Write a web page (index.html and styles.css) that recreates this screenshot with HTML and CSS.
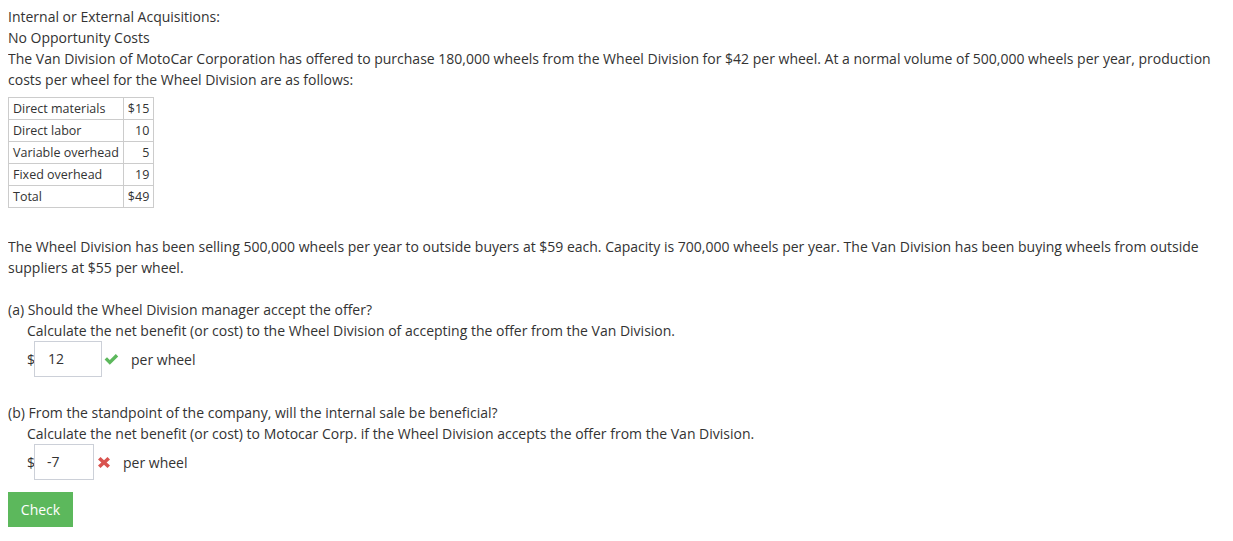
FILE: index.html
```html
<!DOCTYPE html>
<html>
<head>
<meta charset="utf-8">
<link rel="stylesheet" href="styles.css">
</head>
<body>
<div class="intro">
  <div>Internal or External Acquisitions:</div>
  <div>No Opportunity Costs</div>
  <div>The Van Division of MotoCar Corporation has offered to purchase 180,000 wheels from the Wheel Division for $42 per wheel. At a normal volume of 500,000 wheels per year, production costs per wheel for the Wheel Division are as follows:</div>
</div>
<table class="costs">
  <tr><td>Direct materials</td><td class="num">$15</td></tr>
  <tr><td>Direct labor</td><td class="num">10</td></tr>
  <tr><td>Variable overhead</td><td class="num">5</td></tr>
  <tr><td>Fixed overhead</td><td class="num">19</td></tr>
  <tr><td>Total</td><td class="num">$49</td></tr>
</table>
<p class="para">The Wheel Division has been selling 500,000 wheels per year to outside buyers at $59 each. Capacity is 700,000 wheels per year. The Van Division has been buying wheels from outside suppliers at $55 per wheel.</p>

<div class="question q-a">
  <div>(a) Should the Wheel Division manager accept the offer?</div>
  <div class="indent">Calculate the net benefit (or cost) to the Wheel Division of accepting the offer from the Van Division.</div>
  <div class="answer indent">
    <span class="dollar">$</span><span class="field field-a">12</span>
    <svg class="icon icon-ok" width="15" height="11" viewBox="0 0 15 11"><path d="M0.6 5.6 L3 3.2 L5.8 6 L11.8 0 L14.2 2.4 L5.8 10.8 Z" fill="#5cb85c"/></svg>
    <span class="unit">per wheel</span>
  </div>
</div>

<div class="question q-b">
  <div>(b) From the standpoint of the company, will the internal sale be beneficial?</div>
  <div class="indent">Calculate the net benefit (or cost) to Motocar Corp. if the Wheel Division accepts the offer from the Van Division.</div>
  <div class="answer indent">
    <span class="dollar">$</span><span class="field field-b">-7</span>
    <svg class="icon icon-bad" width="12" height="11" viewBox="0 0 12 11"><path d="M2.5 0 L6 3.3 L9.5 0 L12 2.5 L8.6 5.5 L12 8.5 L9.5 11 L6 7.7 L2.5 11 L0 8.5 L3.4 5.5 L0 2.5 Z" fill="#d9534f"/></svg>
    <span class="unit">per wheel</span>
  </div>
</div>

<button class="check">Check</button>
</body>
</html>
```

FILE: styles.css
```css
body {
  margin: 6px 8px 8px 8px;
  font-family: "Open Sans", "Liberation Sans", sans-serif;
  font-size: 14px;
  line-height: 21px;
  color: #333;
  background: #fff;
}
.costs {
  border-collapse: collapse;
  margin-top: 7px;
  font-size: 12.5px;
  line-height: 21px;
}
.costs td {
  border: 1px solid #ccc;
  padding: 0 4px;
  height: 21px;
}
.costs td.num {
  text-align: right;
}
.para {
  margin: 28px 0 0 0;
}
.question.q-a {
  margin-top: 21px;
}
.question.q-b {
  margin-top: 25px;
}
.indent {
  padding-left: 19px;
}
.answer {
  display: flex;
  align-items: center;
  height: 36px;
}
.dollar {
  width: 7px;
}
.field {
  box-sizing: border-box;
  height: 36px;
  border: 1px solid #ccd0d8;
  padding: 0 12px;
  line-height: 34px;
}
.field-a { width: 68px; padding-left: 13px; }
.field-b { width: 60px; }
.icon-ok { margin-left: 2px; margin-top: 1px; }
.icon-bad { margin-left: 4px; margin-top: 1px; }
.icon-ok + .unit { margin-left: 12px; }
.icon-bad + .unit { margin-left: 13px; }
.check {
  display: block;
  margin-top: 12px;
  width: 65px;
  height: 35px;
  border: none;
  background: #5cb85c;
  color: #fff;
  font-family: "Open Sans", "Liberation Sans", sans-serif;
  font-size: 14px;
  padding: 0;
}
```
